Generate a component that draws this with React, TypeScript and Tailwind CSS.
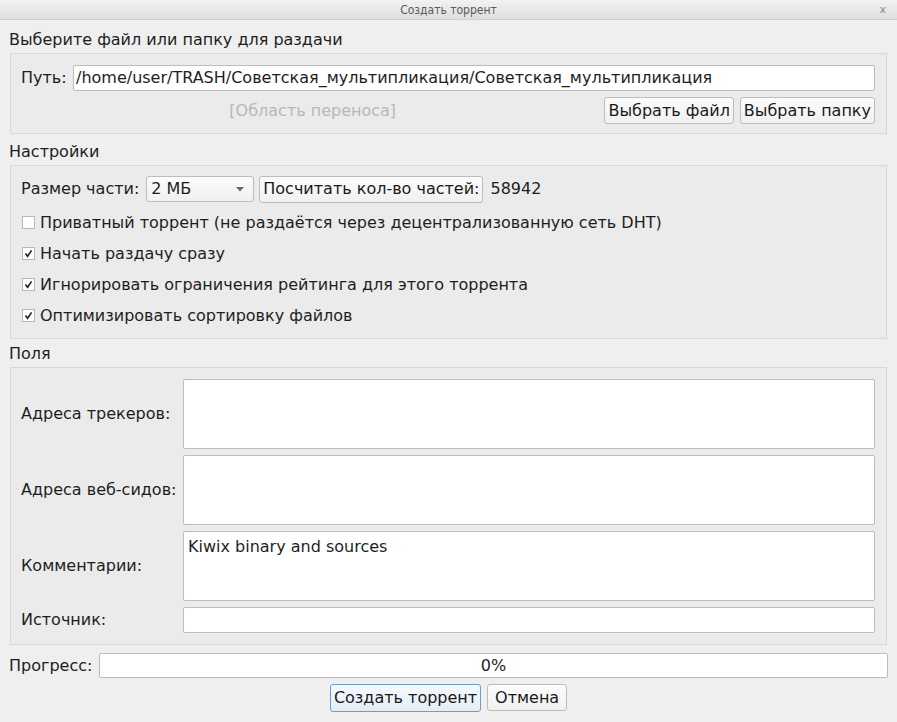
import React from 'react';

const font = { fontFamily: '"DejaVu Sans", "Noto Sans", sans-serif' };

function Button({ children, focused, className = '' }: { children: React.ReactNode; focused?: boolean; className?: string }) {
  return (
    <button
      className={
        (focused
          ? 'h-[28px] px-[3px] rounded-[3px] border border-[#6f9bc9] bg-gradient-to-b from-[#f6fafd] to-[#e3edf7] text-[16px] text-[#1a1a1a] whitespace-nowrap'
          : 'h-[27px] px-[3px] rounded-[3px] border border-[#bdbdbd] bg-gradient-to-b from-[#fcfcfc] to-[#f0f0f0] text-[16px] text-[#1a1a1a] whitespace-nowrap') +
        ' ' +
        className
      }
    >
      {children}
    </button>
  );
}

function Check({ checked, label }: { checked?: boolean; label: string }) {
  return (
    <div className="h-[31px] flex items-center gap-[5px]">
      <span className="w-[13px] h-[13px] ml-[1px] border border-[#b9b9b9] bg-white flex items-center justify-center">
        {checked && (
          <svg width="9" height="9" viewBox="0 0 9 9">
            <path d="M1.5 4.5 L3.6 7.3 L7.6 1.4" fill="none" stroke="#222" strokeWidth="1.6" />
          </svg>
        )}
      </span>
      <span>{label}</span>
    </div>
  );
}

function Heading({ children, h, pt }: { children: React.ReactNode; h: string; pt: string }) {
  return <div className={`${h} ${pt} flex items-center pl-[9px]`}>{children}</div>;
}

export default function App() {
  return (
    <div className="w-[897px] h-[722px] bg-[#efefef] text-[16px] text-[#1e1e1e] flex flex-col overflow-hidden" style={font}>
      {/* title bar */}
      <div className="h-[20px] flex items-center justify-center relative bg-gradient-to-b from-[#f2f2f2] to-[#dedede] border-b border-[#cfcfcf]">
        <span className="text-[12px] text-[#5a5a5a]" style={{ fontFamily: '"DejaVu Sans Condensed", "Liberation Sans Narrow", sans-serif' }}>
          Создать торрент
        </span>
        <span className="absolute right-[11px] top-[2px] text-[11px] text-[#8a8a8a]">x</span>
      </div>

      <Heading h="h-[33px]" pt="pt-[6px]">Выберите файл или папку для раздачи</Heading>

      <div className="mx-[10px] h-[81px] border border-[#d8d8d8] bg-[#ebebeb] pl-[10px] pr-[11px] pt-[11px] flex flex-col gap-[6px]">
        <div className="flex items-center h-[26px]">
          <span className="w-[52px]">Путь:</span>
          <div className="flex-1 h-[26px] bg-white border border-[#bdbdbd] rounded-[2px] flex items-center pl-[2px] whitespace-nowrap overflow-hidden">
            /home/user/TRASH/Советская_мультипликация/Советская_мультипликация
          </div>
        </div>
        <div className="flex items-center h-[27px]">
          <div className="flex-1 flex justify-center text-[#b8b8b8]">[Область переноса]</div>
          <div className="flex gap-[6px]">
            <Button>Выбрать файл</Button>
            <Button>Выбрать папку</Button>
          </div>
        </div>
      </div>

      <Heading h="h-[31px]" pt="pt-[4px]">Настройки</Heading>

      <div className="mx-[10px] h-[174px] border border-[#d8d8d8] bg-[#ebebeb] pl-[10px] pt-[10px] flex flex-col">
        <div className="flex items-center h-[26px] gap-[5px]">
          <span className="mr-[2px]">Размер части:</span>
          <div className="w-[108px] h-[26px] rounded-[3px] border border-[#bdbdbd] bg-gradient-to-b from-[#fcfcfc] to-[#f0f0f0] flex items-center justify-between pl-[4px] pr-[9px]">
            <span>2 МБ</span>
            <svg width="8" height="5" viewBox="0 0 8 5">
              <path d="M0 0 L8 0 L4 4.5 Z" fill="#6a6a6a" />
            </svg>
          </div>
          <Button>Посчитать кол-во частей:</Button>
          <span className="ml-[2px]">58942</span>
        </div>
        <div className="mt-[5px]">
          <Check label="Приватный торрент (не раздаётся через децентрализованную сеть DHT)" />
          <Check checked label="Начать раздачу сразу" />
          <Check checked label="Игнорировать ограничения рейтинга для этого торрента" />
          <Check checked label="Оптимизировать сортировку файлов" />
        </div>
      </div>

      <Heading h="h-[28px]" pt="pt-[2px]">Поля</Heading>

      <div className="mx-[10px] h-[278px] border border-[#d8d8d8] bg-[#ebebeb] pl-[10px] pr-[11px] pt-[11px] grid grid-cols-[162px_1fr] gap-y-[6px] content-start">
        <div className="h-[70px] flex items-center">Адреса трекеров:</div>
        <div className="h-[70px] bg-white border border-[#bdbdbd] rounded-[2px]" />
        <div className="h-[70px] flex items-center">Адреса веб-сидов:</div>
        <div className="h-[70px] bg-white border border-[#bdbdbd] rounded-[2px]" />
        <div className="h-[70px] flex items-center">Комментарии:</div>
        <div className="h-[70px] bg-white border border-[#bdbdbd] rounded-[2px] pl-[4px] pt-[3px]">Kiwix binary and sources</div>
        <div className="h-[26px] flex items-center">Источник:</div>
        <div className="h-[26px] bg-white border border-[#bdbdbd] rounded-[2px]" />
      </div>

      <div className="flex items-center mt-[8px] pl-[9px] pr-[9px] h-[25px]">
        <span className="w-[90px]">Прогресс:</span>
        <div className="flex-1 h-[25px] bg-white border border-[#bdbdbd] rounded-[2px] flex items-center justify-center">0%</div>
      </div>

      <div className="flex justify-center gap-[6px] mt-[6px]">
        <Button focused>Создать торрент</Button>
        <Button className="w-[80px]">Отмена</Button>
      </div>
    </div>
  );
}
